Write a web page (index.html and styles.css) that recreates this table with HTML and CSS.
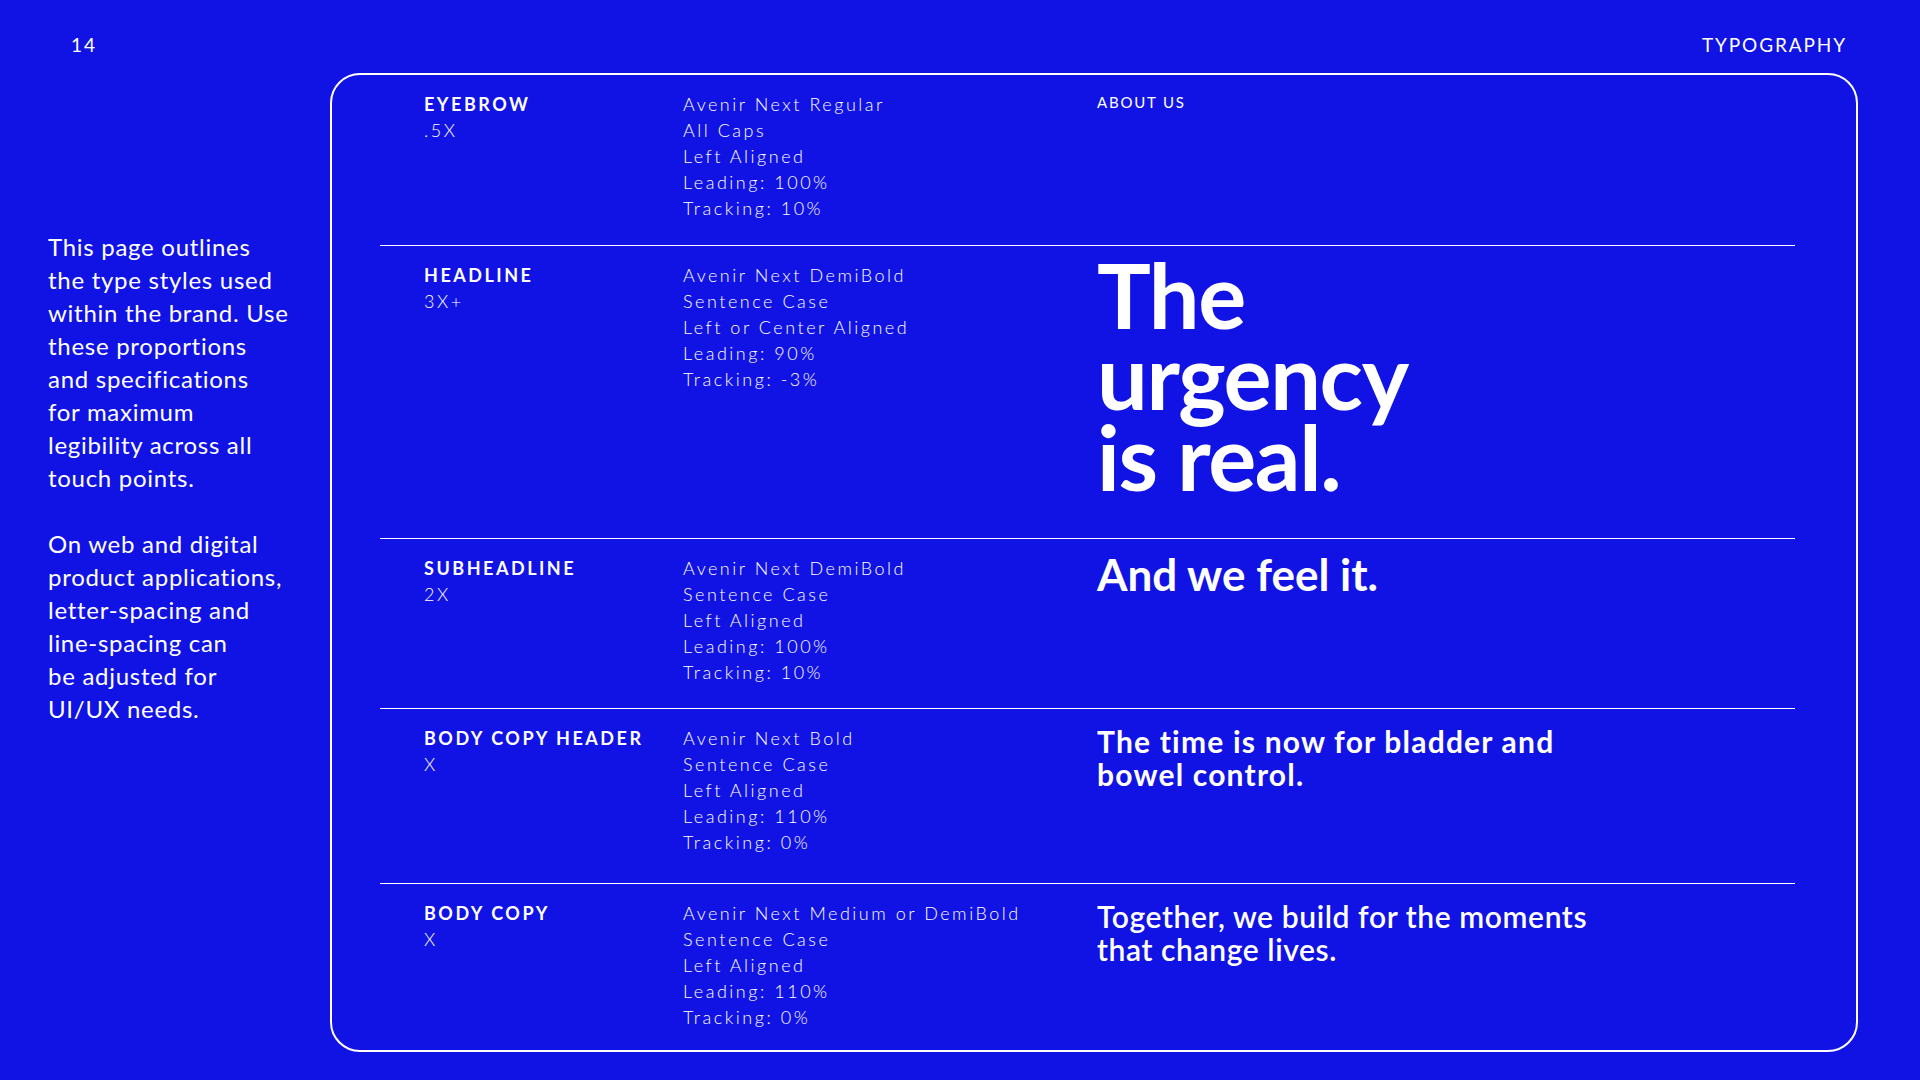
FILE: index.html
```html
<!DOCTYPE html>
<html lang="en">
<head>
<meta charset="utf-8">
<title>Typography</title>
<link rel="stylesheet" href="styles.css">
</head>
<body>
<div class="page">
  <header class="topbar">
    <span class="pagenum">14</span>
    <span class="section">TYPOGRAPHY</span>
  </header>
  <main class="main">
    <aside class="intro">
      <p>This page outlines<br>the type styles used<br>within the brand. Use<br>these proportions<br>and specifications<br>for maximum<br>legibility across all<br>touch points.</p>
      <p>On web and digital<br>product applications,<br>letter-spacing and<br>line-spacing can<br>be adjusted for<br>UI/UX needs.</p>
    </aside>
    <section class="spec-card">
      <div class="spec-row">
        <div class="label"><div class="name">EYEBROW</div><div class="scale">.5X</div></div>
        <div class="specs">Avenir Next Regular<br>All Caps<br>Left Aligned<br>Leading: 100%<br>Tracking: 10%</div>
        <div class="sample sample-eyebrow">ABOUT US</div>
      </div>
      <div class="spec-row">
        <div class="label"><div class="name">HEADLINE</div><div class="scale">3X+</div></div>
        <div class="specs">Avenir Next DemiBold<br>Sentence Case<br>Left or Center Aligned<br>Leading: 90%<br>Tracking: -3%</div>
        <div class="sample sample-headline"><div class="hl-line">The</div><div class="hl-line">urgency</div><div class="hl-line">is real.</div></div>
      </div>
      <div class="spec-row">
        <div class="label"><div class="name">SUBHEADLINE</div><div class="scale">2X</div></div>
        <div class="specs">Avenir Next DemiBold<br>Sentence Case<br>Left Aligned<br>Leading: 100%<br>Tracking: 10%</div>
        <div class="sample sample-sub">And we feel it.</div>
      </div>
      <div class="spec-row">
        <div class="label"><div class="name">BODY COPY HEADER</div><div class="scale">X</div></div>
        <div class="specs">Avenir Next Bold<br>Sentence Case<br>Left Aligned<br>Leading: 110%<br>Tracking: 0%</div>
        <div class="sample sample-bodyhead">The time is now for bladder and<br>bowel control.</div>
      </div>
      <div class="spec-row">
        <div class="label"><div class="name">BODY COPY</div><div class="scale">X</div></div>
        <div class="specs">Avenir Next Medium or DemiBold<br>Sentence Case<br>Left Aligned<br>Leading: 110%<br>Tracking: 0%</div>
        <div class="sample sample-body">Together, we build for the moments<br>that change lives.</div>
      </div>
    </section>
  </main>
</div>
</body>
</html>
```

FILE: styles.css
```css
* { box-sizing: border-box; }
html, body { margin: 0; padding: 0; }
body {
  background: #1113e5;
  color: #ffffff;
  font-family: "Lato", "Noto Sans", sans-serif;
}
.page {
  width: 1920px;
  height: 1080px;
  display: flex;
  flex-direction: column;
  overflow: hidden;
}
.topbar {
  display: flex;
  justify-content: space-between;
  padding: 34px 73px 0 71px;
  height: 56px;
  font-size: 19px;
  line-height: 22px;
  letter-spacing: 0.1em;
  font-weight: 400;
}
.main {
  display: flex;
  margin-top: 17px;
}
.intro {
  width: 330px;
  padding: 157px 0 0 48px;
  font-size: 24px;
  line-height: 33px;
  letter-spacing: 0.03em;
  white-space: nowrap;
}
.intro p { margin: 0 0 33px 0; }
.spec-card {
  width: 1528px;
  height: 979px;
  border: 2px solid #ffffff;
  border-radius: 30px;
  padding: 0 61px 0 48px;
  display: grid;
  grid-template-rows: 171px 293px 170px 175px 1fr;
}
.spec-row {
  display: grid;
  grid-template-columns: 259px 414px 1fr;
  padding: 16px 0 0 44px;
  border-bottom: 1px solid #ffffff;
}
.spec-row:last-child { border-bottom: none; }
.label, .specs {
  font-size: 18px;
  line-height: 26px;
  letter-spacing: 0.14em;
  white-space: nowrap;
}
.name { font-weight: 700; letter-spacing: 0.14em; }
.scale { font-weight: 300; }
.specs { font-weight: 300; }
.sample { white-space: nowrap; }
.sample-eyebrow {
  font-size: 15px;
  line-height: 22px;
  letter-spacing: 0.12em;
  font-weight: 400;
}
.sample-headline {
  font-size: 90px;
  font-weight: 700;
  letter-spacing: -0.015em;
  margin-top: -8px;
}
.hl-line {
  height: 81px;
  line-height: 81px;
}
.sample-sub {
  font-size: 44px;
  line-height: 44px;
  font-weight: 700;
  margin-top: -3px;
}
.sample-bodyhead {
  font-size: 30px;
  line-height: 33px;
  font-weight: 700;
  letter-spacing: 0.04em;
}
.sample-body {
  font-size: 30px;
  line-height: 33px;
  font-weight: 600;
  letter-spacing: 0.02em;
}
```
